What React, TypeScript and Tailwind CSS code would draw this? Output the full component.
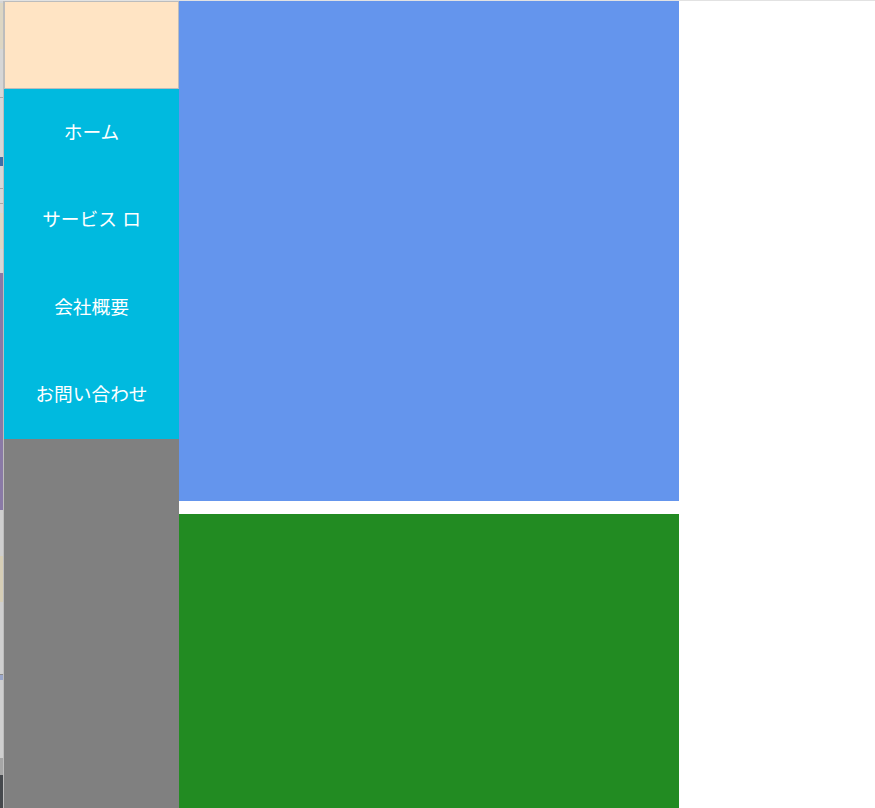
// === Types ===-===-===-===-===-===-===-===-===-===-===-===-===-===-===-===-===
type TNavItem = {
	label: string;
};

// === Data  ===-===-===-===-===-===-===-===-===-===-===-===-===-===-===-===-===
const navItems: TNavItem[] = [
	{ label: "ホーム" },
	{ label: "サービス ロ" },
	{ label: "会社概要" },
	{ label: "お問い合わせ" },
];

// === Parts ===-===-===-===-===-===-===-===-===-===-===-===-===-===-===-===-===
// the sliver of another window peeking in on the left edge
const EdgeStrip = () => (
	<div className="flex h-full">
		<div className="flex w-[3px] flex-col bg-[#d6d6d6]">
			<div className="h-[2px]" />
			<div className="h-[46px] bg-[#ddd6c3]" />
			<div className="h-[48px]" />
			<div className="h-px bg-[#a8a8a8]" />
			<div className="h-[59px]" />
			<div className="h-[9px] bg-[#3f6fa6]" />
			<div className="h-[22px]" />
			<div className="h-px bg-[#a8a8a8]" />
			<div className="h-[14px]" />
			<div className="h-px bg-[#a8a8a8]" />
			<div className="h-[9px]" />
			<div className="h-[36px] bg-[#ddd6c3]" />
			<div className="h-[24px]" />
			<div className="h-[237px] bg-[#8a7aa6]" />
			<div className="h-[46px] bg-[#cfcfcf]" />
			<div className="h-[46px] bg-[#d6ceb6]" />
			<div className="h-[72px] bg-[#cfcfcf]" />
			<div className="h-px bg-[#8a8a8a]" />
			<div className="h-[5px] bg-[#9aa6c8]" />
			<div className="h-[78px] bg-[#cfcfcf]" />
			<div className="h-[17px] bg-[#a6a6a6]" />
			<div className="flex-1 bg-[#46494d]" />
		</div>
		<div className="w-px bg-[#bdbdbd]" />
	</div>
);

const SideNav = () => (
	<aside className="flex h-full w-[175px] flex-col">
		<div className="h-[88px] border border-[#bcbcbc] bg-[#ffe4c4]" />
		<nav className="flex flex-col bg-[#00badf]">
			{navItems.map((item) => (
				<a
					key={item.label}
					className="flex h-[87.5px] items-center justify-center text-[18.7px] text-white"
					href="#"
				>
					{item.label}
				</a>
			))}
		</nav>
		<div className="flex-1 bg-[#808080]" />
	</aside>
);

// === Main  ===-===-===-===-===-===-===-===-===-===-===-===-===-===-===-===-===
const App = () => {
	return (
		<div
			className="h-[808px] overflow-hidden border-t border-[#e2e2e2] bg-white"
			style={{
				fontFamily:
					'Inter, "Noto Sans CJK JP", "Noto Sans", sans-serif',
			}}
		>
			<div className="flex h-full">
				<EdgeStrip />
				<SideNav />
				<main className="flex w-[500px] flex-col">
					<section className="h-[500px] bg-[#6495ed]" />
					<section className="mt-[13px] flex-1 bg-[#228b22]" />
				</main>
			</div>
		</div>
	);
};

export default App;
